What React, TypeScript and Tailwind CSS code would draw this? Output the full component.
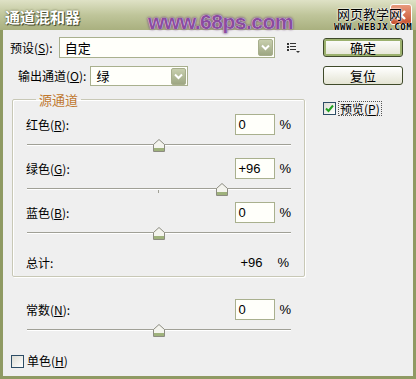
import React from "react";

const cjk = { fontFamily: '"Noto Sans CJK SC", "Liberation Sans", sans-serif' };
const lat = { fontFamily: '"Liberation Sans", "Noto Sans CJK SC", sans-serif' };

function Label({ text, k, after = "):" }: { text: string; k: string; after?: string }) {
  return (
    <span className="text-[12px] leading-none text-black whitespace-nowrap" style={cjk}>
      {text}(<span className="underline">{k}</span>{after}
    </span>
  );
}

function DropBtn() {
  return (
    <div className="w-[15px] h-[17px] rounded-[2px] bg-gradient-to-b from-[#c8cfae] to-[#9ea783] border border-[#a7ae8c] flex items-center justify-center">
      <svg width="9" height="7" viewBox="0 0 9 7">
        <path d="M1 1.5 L4.5 5 L8 1.5" fill="none" stroke="#fff" strokeWidth="2" />
      </svg>
    </div>
  );
}

function Thumb() {
  return (
    <svg width="12" height="13" viewBox="0 0 12 13">
      <path d="M0.5 5.5 L6 0.5 L11.5 5.5 L11.5 12.5 L0.5 12.5 Z" fill="#f4f4ee" stroke="#8c8c80" />
      <rect x="1" y="9" width="10" height="3" fill="#9fb27c" />
    </svg>
  );
}

function Slider({ value }: { value: number }) {
  const pos = ((value + 200) / 400) * 100;
  return (
    <div className="relative h-[23px] w-[264px] ml-[1px]">
      <div className="absolute left-0 right-0 top-[9px] h-[2px] border-t border-[#a0a096] bg-white" />
      <div className="absolute left-[131px] top-[11px] w-[1px] h-[3px] bg-[#a0a096]" />
      <div className="absolute top-[4px]" style={{ left: `calc(${pos}% - 6px)` }}>
        <Thumb />
      </div>
    </div>
  );
}

function NumBox({ v }: { v: string }) {
  return (
    <div className="flex items-center">
      <div className="w-[40px] h-[21px] border border-[#a9b08e] bg-[#fffffa] flex items-center pl-[2px] text-[13px] text-black" style={lat}>
        {v}
      </div>
      <span className="ml-[4px] text-[13px] text-black" style={lat}>%</span>
    </div>
  );
}

function ChannelRow({ text, k, v, value }: { text: string; k: string; v: string; value: number }) {
  return (
    <div className="flex flex-col">
      <div className="flex items-center justify-between w-[265px] h-[21px]">
        <Label text={text} k={k} />
        <NumBox v={v} />
      </div>
      <Slider value={value} />
    </div>
  );
}

function XPButton({ children, def }: { children: React.ReactNode; def?: boolean }) {
  return (
    <div
      className={
        "w-[80px] h-[19px] rounded-[3px] border border-[#3f4a2a] bg-gradient-to-b from-[#ffffff] to-[#e4e4d4] flex items-center justify-center text-[13px] text-black " +
        (def ? "shadow-[inset_0_0_0_2px_#9cb16e]" : "")
      }
      style={cjk}
    >
      {children}
    </div>
  );
}

export default function App() {
  return (
    <div className="w-[416px] h-[379px] bg-[#efefef] flex flex-col overflow-hidden">
      {/* Title bar */}
      <div className="relative h-[30px] bg-gradient-to-b from-[#dfe2c6] via-[#bfc59a] to-[#a9b07f] shrink-0">
        <div
          className="absolute left-[5px] top-[6px] text-[15px] font-bold text-white whitespace-nowrap"
          style={{ ...cjk, textShadow: "1px 1px 0 #4c5030, 0 0 2px #4c5030" }}
        >
          通道混和器
        </div>
        <div
          className="absolute left-[148px] top-[11px] text-[21px] font-bold leading-none tracking-[-0.5px] text-[#8a4c9f] whitespace-nowrap"
          style={{ ...lat, textShadow: "0 0 1px #fff, 0 0 1px #fff, 0 0 2px #5a2a6a, 0 0 3px #5a2a6a" }}
        >
          www.68ps.com
        </div>
        <div className="absolute right-[4px] top-[4px] w-[22px] h-[21px] rounded-[3px] bg-gradient-to-b from-[#e89a7c] to-[#c8502e] border border-white flex items-center justify-center">
          <svg width="12" height="12" viewBox="0 0 12 12">
            <path d="M2 2 L10 10 M10 2 L2 10" stroke="#fff" strokeWidth="2.4" />
          </svg>
        </div>
        <div
          className="absolute left-[337px] top-[7px] text-[13px] leading-none text-black whitespace-nowrap"
          style={{ ...cjk, textShadow: "0 0 1px #fff, 0 0 2px #fff, 0 0 2px #fff" }}
        >
          网页教学网
        </div>
        <div
          className="absolute left-[334px] top-[23px] text-[9px] font-bold leading-none text-black tracking-[0.6px] whitespace-nowrap"
          style={{ fontFamily: '"DejaVu Sans Mono", monospace', textShadow: "0 0 1px #fff, 0 0 1px #fff" }}
        >
          WWW.WEBJX.COM
        </div>
      </div>

      {/* Body */}
      <div className="flex-1 flex border-l-[3px] border-r-[3px] border-b-[3px] border-[#8f9a63]">
        {/* Left column */}
        <div className="w-[318px] flex flex-col">
          {/* preset row */}
          <div className="flex items-center mt-[7px] h-[21px] pl-[7px]">
            <Label text="预设" k="S" />
            <div className="ml-[6px] w-[216px] h-[21px] border border-[#a9b08e] bg-[#fffffa] flex items-center justify-between pl-[5px] pr-[1px]">
              <span className="text-[13px] text-black" style={cjk}>自定</span>
              <DropBtn />
            </div>
            <svg className="ml-[12px]" width="14" height="12" viewBox="0 0 14 12">
              <rect x="0" y="1" width="2" height="2" fill="#333" />
              <rect x="3" y="1" width="6" height="1" fill="#333" />
              <rect x="0" y="4" width="2" height="2" fill="#333" />
              <rect x="3" y="4" width="6" height="1" fill="#333" />
              <rect x="0" y="7" width="2" height="2" fill="#333" />
              <rect x="3" y="7" width="6" height="1" fill="#333" />
              <path d="M9 9 L13 9 L11 11 Z" fill="#333" />
            </svg>
          </div>

          {/* output channel */}
          <div className="flex items-center mt-[8px] h-[20px] pl-[15px]">
            <Label text="输出通道" k="O" />
            <div className="ml-[4px] w-[98px] h-[20px] border border-[#a9b08e] bg-[#fffffa] flex items-center justify-between pl-[5px] pr-[1px]">
              <span className="text-[13px] text-black" style={cjk}>绿</span>
              <DropBtn />
            </div>
          </div>

          {/* Source channels group */}
          <fieldset className="mt-[7px] ml-[9px] w-[293px] h-[184px] border border-[#c8c8b6] rounded-[2px] shadow-[inset_1px_1px_0_#fff,1px_1px_0_#fff] pl-[13px] flex flex-col">
            <legend className="ml-[10px] px-[3px] text-[13px] leading-none text-[#c0782f]" style={cjk}>
              源通道
            </legend>
            <div className="mt-[8px] flex flex-col">
              <ChannelRow text="红色" k="R" v="0" value={0} />
              <ChannelRow text="绿色" k="G" v="+96" value={96} />
              <ChannelRow text="蓝色" k="B" v="0" value={0} />
              <div className="flex items-center justify-between w-[265px] h-[14px] mt-[10px]">
                <span className="text-[12px] leading-none text-black" style={cjk}>总计:</span>
                <div className="flex items-center text-[13px] text-black" style={lat}>
                  <span className="w-[37px]">+96</span>
                  <span className="mr-[2px]">%</span>
                </div>
              </div>
            </div>
          </fieldset>

          {/* constant */}
          <div className="mt-[22px] ml-[23px] flex flex-col">
            <div className="flex items-center justify-between w-[265px] h-[21px]">
              <Label text="常数" k="N" />
              <NumBox v="0" />
            </div>
            <Slider value={0} />
          </div>

          {/* monochrome */}
          <div className="mt-[9px] ml-[8px] flex items-center">
            <div className="w-[13px] h-[13px] border border-[#2d4d66] bg-gradient-to-br from-[#dcdcd4] to-[#ffffff]" />
            <span className="ml-[3px] text-[12px] text-black" style={cjk}>
              单色(<span className="underline">H</span>)
            </span>
          </div>
        </div>

        {/* Right column */}
        <div className="flex flex-col pl-[2px] pt-[8px]">
          <XPButton def>确定</XPButton>
          <div className="mt-[9px]">
            <XPButton>复位</XPButton>
          </div>
          <div className="mt-[16px] flex items-center">
            <div className="w-[13px] h-[13px] border border-[#2d4d66] bg-gradient-to-br from-[#dcdcd4] to-[#ffffff] flex items-center justify-center">
              <svg width="9" height="9" viewBox="0 0 9 9">
                <path d="M1 4.5 L3.5 7 L8 1.5" fill="none" stroke="#21a121" strokeWidth="2" />
              </svg>
            </div>
            <span className="ml-[2px] text-[12px] text-black border border-dotted border-[#555] px-[1px] leading-[13px]" style={cjk}>
              预览(<span className="underline">P</span>)
            </span>
          </div>
        </div>
      </div>
    </div>
  );
}
